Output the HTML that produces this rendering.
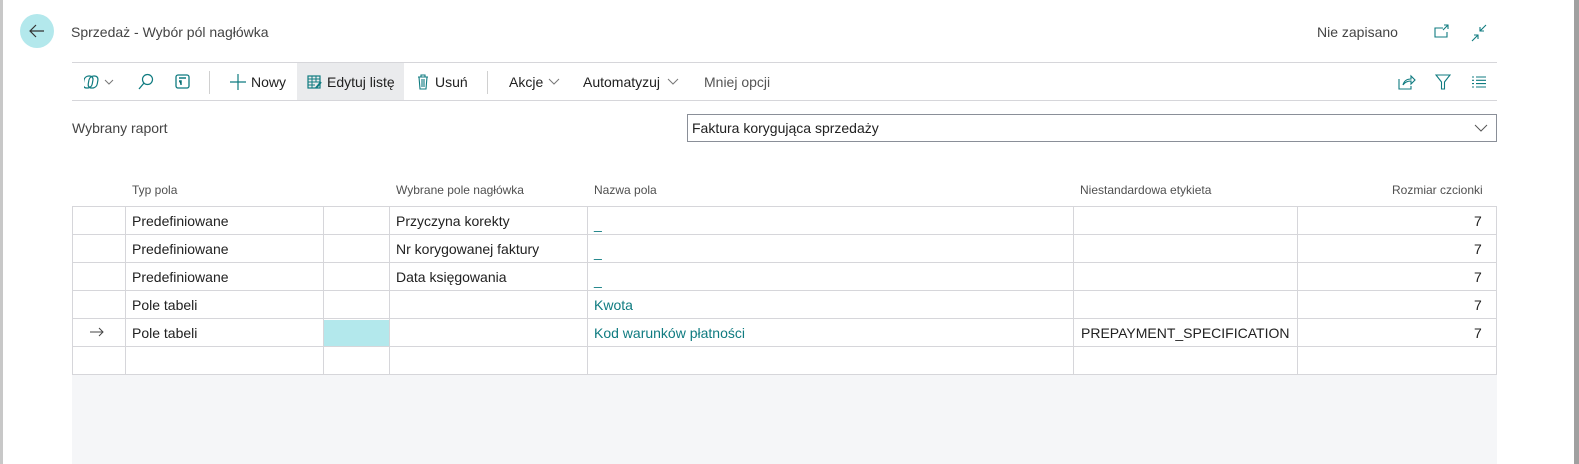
<!DOCTYPE html>
<html><head><meta charset="utf-8"><style>
*{box-sizing:border-box;margin:0;padding:0}
body{width:1579px;height:464px;overflow:hidden;background:#fff;font-family:"Liberation Sans",sans-serif;font-size:14px;color:#212121;position:relative}
.abs{position:absolute}
.t{position:absolute;white-space:nowrap}
.teal{color:#0f7b80}
svg{position:absolute}
.hdr{font-size:12px;color:#505050}
</style></head><body>
<div class="abs" style="left:0;top:0;width:3px;height:464px;background:#c8c8c8"></div>
<div class="abs" style="left:1574px;top:0;width:5px;height:464px;background:#a0a0a0"></div>

<div class="abs" style="left:20px;top:14px;width:34px;height:34px;border-radius:50%;background:#b3e8ec"></div>
<svg style="left:28px;top:22px" width="18" height="18" viewBox="0 0 18 18"><path d="M16 9H2M8 3L2 9l6 6" fill="none" stroke="#333" stroke-width="1.2"/></svg>
<div class="t" style="left:71px;top:24px;color:#444">Sprzedaż - Wybór pól nagłówka</div>
<div class="t" style="left:1317px;top:24px;color:#444">Nie zapisano</div>
<svg style="left:1434px;top:24px" width="16" height="14" viewBox="0 0 16 14"><path d="M9 4H1v9h12V8M10 1h4v4M14 1l-5 5" fill="none" stroke="#0f7b80" stroke-width="1.1"/></svg>
<svg style="left:1470px;top:24px" width="18" height="18" viewBox="0 0 18 18"><path d="M16 1l-6 6M10 3v4h4M2 17l6-6M8 15v-4H4" fill="none" stroke="#0f7b80" stroke-width="1.1"/></svg>

<div class="abs" style="left:72px;top:62px;width:1425px;height:1px;background:#d6d6da"></div>
<div class="abs" style="left:72px;top:100px;width:1425px;height:1px;background:#d6d6da"></div>

<svg style="left:84px;top:74px" width="34" height="16" viewBox="0 0 34 16"><rect x="1" y="2" width="9" height="12" rx="4" transform="skewX(-10)" fill="none" stroke="#0f7b80" stroke-width="1.2"/><rect x="6" y="2" width="9" height="12" rx="4" transform="skewX(-10)" fill="none" stroke="#0f7b80" stroke-width="1.2"/><path d="M21 6l4 4 4-4" fill="none" stroke="#777" stroke-width="1"/></svg>
<svg style="left:138px;top:73px" width="16" height="18" viewBox="0 0 16 18"><circle cx="9.5" cy="6.5" r="5" fill="none" stroke="#0f7b80" stroke-width="1.2"/><path d="M6 10l-5 6" stroke="#0f7b80" stroke-width="1.3"/></svg>
<svg style="left:175px;top:74px" width="16" height="16" viewBox="0 0 16 16"><rect x="1" y="1" width="13" height="13" rx="2" fill="none" stroke="#0f7b80" stroke-width="1.3"/><path d="M4 4h7M4 7h2v4" stroke="#0f7b80" stroke-width="1.5"/></svg>
<div class="abs" style="left:209px;top:71px;width:1px;height:23px;background:#d0d0d0"></div>
<svg style="left:230px;top:74px" width="16" height="16" viewBox="0 0 16 16"><path d="M8 0v16M0 8h16" stroke="#0f7b80" stroke-width="1.2"/></svg>
<div class="t" style="left:251px;top:74px">Nowy</div>
<div class="abs" style="left:297px;top:63px;width:107px;height:37px;background:#eaebed"></div>
<svg style="left:307px;top:75px" width="16" height="14" viewBox="0 0 16 14"><rect x="1" y="1" width="12" height="12" fill="none" stroke="#0f7b80" stroke-width="1.2"/><path d="M1 4h12M1 7h12M1 10h7M5 1v12M9 1v6" stroke="#0f7b80" stroke-width="1"/><path d="M9 13l5-6" stroke="#0f7b80" stroke-width="2"/></svg>
<div class="t" style="left:327px;top:74px">Edytuj listę</div>
<svg style="left:417px;top:74px" width="12" height="16" viewBox="0 0 12 16"><path d="M1 3h10M4 3V1h4v2M2 3l1 12h6l1-12M5 5v8M7 5v8" fill="none" stroke="#0f7b80" stroke-width="1.1"/></svg>
<div class="t" style="left:435px;top:74px">Usuń</div>
<div class="abs" style="left:487px;top:71px;width:1px;height:23px;background:#d0d0d0"></div>
<div class="t" style="left:509px;top:74px">Akcje</div>
<svg style="left:548px;top:78px" width="12" height="8" viewBox="0 0 12 8"><path d="M1 1l5 5 5-5" fill="none" stroke="#777"/></svg>
<div class="t" style="left:583px;top:74px">Automatyzuj</div>
<svg style="left:667px;top:78px" width="12" height="8" viewBox="0 0 12 8"><path d="M1 1l5 5 5-5" fill="none" stroke="#777"/></svg>
<div class="t" style="left:704px;top:74px;color:#555">Mniej opcji</div>

<svg style="left:1398px;top:74px" width="18" height="16" viewBox="0 0 18 16"><path d="M1 5v10h12v-3M5 11c1-4 4-6 8-6V2l4 4-4 4V7c-3 0-6 1-8 4z" fill="none" stroke="#0f7b80" stroke-width="1.1"/></svg>
<svg style="left:1435px;top:74px" width="16" height="16" viewBox="0 0 16 16"><path d="M1 1h14L9.5 8v7h-3V8z" fill="none" stroke="#0f7b80" stroke-width="1.1"/></svg>
<svg style="left:1471px;top:76px" width="16" height="12" viewBox="0 0 16 12"><path d="M1 1h2M5 1h10M1 4.3h2M5 4.3h10M1 7.6h2M5 7.6h10M1 11h2M5 11h10" stroke="#0f7b80" stroke-width="1.1"/></svg>

<div class="t" style="left:72px;top:120px;color:#444">Wybrany raport</div>
<div class="abs" style="left:687px;top:114px;width:810px;height:28px;border:1px solid #8a8f98"></div>
<div class="t" style="left:692px;top:120px">Faktura korygująca sprzedaży</div>
<svg style="left:1474px;top:124px" width="14" height="9" viewBox="0 0 14 9"><path d="M1 1l6 6 6-6" fill="none" stroke="#555"/></svg>

<div class="t hdr" style="left:132px;top:183px">Typ pola</div>
<div class="t hdr" style="left:396px;top:183px">Wybrane pole nagłówka</div>
<div class="t hdr" style="left:594px;top:183px">Nazwa pola</div>
<div class="t hdr" style="left:1080px;top:183px">Niestandardowa etykieta</div>
<div class="t hdr" style="left:1392px;top:183px">Rozmiar czcionki</div>

<div class="abs" style="left:72px;top:374px;width:1425px;height:90px;background:#f5f6f8"></div>
<div class="abs" style="left:324px;top:320px;width:65px;height:27px;background:#b3e8ec"></div>
<svg class="abs" style="left:72px;top:206px" width="1426" height="169">
<g stroke="#d6d6da" stroke-width="1" fill="none">
<path d="M0.5 0V168M53.5 0V168M251.5 0V168M317.5 0V168M515.5 0V168M1001.5 0V168M1225.5 0V168M1424.5 0V168"/>
<path d="M0 0.5H1425M0 28.5H1425M0 56.5H1425M0 84.5H1425M0 112.5H1425M0 140.5H1425M0 168.5H1425"/>
</g></svg>

<div class="t" style="left:132px;top:213px">Predefiniowane</div>
<div class="t" style="left:396px;top:213px">Przyczyna korekty</div>
<div class="t teal" style="left:594px;top:216px">_</div>
<div class="t" style="left:1474px;top:213px">7</div>

<div class="t" style="left:132px;top:241px">Predefiniowane</div>
<div class="t" style="left:396px;top:241px">Nr korygowanej faktury</div>
<div class="t teal" style="left:594px;top:244px">_</div>
<div class="t" style="left:1474px;top:241px">7</div>

<div class="t" style="left:132px;top:269px">Predefiniowane</div>
<div class="t" style="left:396px;top:269px">Data księgowania</div>
<div class="t teal" style="left:594px;top:272px">_</div>
<div class="t" style="left:1474px;top:269px">7</div>

<div class="t" style="left:132px;top:297px">Pole tabeli</div>
<div class="t teal" style="left:594px;top:297px">Kwota</div>
<div class="t" style="left:1474px;top:297px">7</div>

<svg style="left:90px;top:327px" width="14" height="10" viewBox="0 0 14 10"><path d="M0 5h13M9 1l4 4-4 4" fill="none" stroke="#444"/></svg>
<div class="t" style="left:132px;top:325px">Pole tabeli</div>
<div class="t teal" style="left:594px;top:325px">Kod warunków płatności</div>
<div class="t" style="left:1081px;top:325px">PREPAYMENT_SPECIFICATION</div>
<div class="t" style="left:1474px;top:325px">7</div>
</body></html>
